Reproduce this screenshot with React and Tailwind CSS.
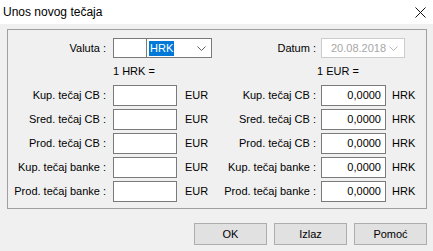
import React from "react";

const leftRows = ["Kup. tečaj CB :", "Sred. tečaj CB :", "Prod. tečaj CB :", "Kup. tečaj banke :", "Prod. tečaj banke :"];

const Chevron = ({ color = "#606060" }) => (
    <svg width="9" height="5" viewBox="0 0 9 5" className="block">
        <path d="M0.5 0.5 L4.5 4.5 L8.5 0.5" fill="none" stroke={color} strokeWidth="1" />
    </svg>
);

const RateRow = ({ label, value, unit, labelW, inputW, gap, unitGap }) => (
    <div className="flex items-center h-[21px]">
        <div className="text-right shrink-0" style={{ width: labelW }}>{label}</div>
        <div
            className="h-[21px] border border-[#7a7a7a] bg-white flex items-center justify-end pr-[4px] shrink-0"
            style={{ width: inputW, marginLeft: gap }}
        >
            {value}
        </div>
        <div style={{ marginLeft: unitGap }}>{unit}</div>
    </div>
);

export default function App() {
    return (
        <div
            className="w-[433px] h-[251px] bg-[#f0f0f0] text-[11px] text-black overflow-hidden flex flex-col"
            style={{ fontFamily: '"Liberation Sans", Arial, sans-serif' }}
        >
            {/* Title bar */}
            <div className="h-[24px] bg-white flex items-center justify-between pl-[3px] pr-[7px] shrink-0">
                <span className="text-[12px] leading-none">Unos novog tečaja</span>
                <svg width="11" height="11" viewBox="0 0 11 11">
                    <path d="M0.5 0.5 L10.5 10.5 M10.5 0.5 L0.5 10.5" stroke="#111" strokeWidth="1" />
                </svg>
            </div>

            {/* Frame */}
            <div className="ml-[7px] mt-[5px] w-[420px] h-[180px] border border-[#a0a0a0] flex">
                {/* Left half */}
                <div className="w-[207px] flex flex-col pt-[8px]">
                    <div className="flex items-center h-[20px]">
                        <div className="w-[98px] text-right">Valuta :</div>
                        <div className="ml-[7px] w-[99px] h-[20px] border border-[#7a7a7a] bg-white flex">
                            <div className="w-[33px] border-r border-[#7a7a7a]"></div>
                            <div className="flex-1 flex items-center justify-between pl-[2px] pr-[5px]">
                                <span className="bg-[#0078d7] text-white h-[15px] px-[1px] flex items-center">HRK</span>
                                <Chevron />
                            </div>
                        </div>
                    </div>
                    <div className="h-[14px] mt-[6px] mb-[7px] pl-[105px] flex items-center">1 HRK =</div>
                    <div className="flex flex-col gap-[3px]">
                        {leftRows.map((l) => (
                            <RateRow key={l} label={l} value="" unit="EUR" labelW={98} inputW={64} gap={7} unitGap={8} />
                        ))}
                    </div>
                </div>

                {/* Right half */}
                <div className="flex-1 flex flex-col pt-[8px]">
                    <div className="flex items-center h-[20px]">
                        <div className="w-[101px] text-right">Datum :</div>
                        <div className="ml-[5px] w-[84px] h-[20px] border border-[#cccccc] bg-white flex items-center justify-between pl-[9px] pr-[6px] text-[#a6a6a6]">
                            <span>20.08.2018</span>
                            <Chevron color="#b4b4b4" />
                        </div>
                    </div>
                    <div className="h-[14px] mt-[6px] mb-[7px] pl-[102px] flex items-center">1 EUR =</div>
                    <div className="flex flex-col gap-[3px]">
                        {leftRows.map((l) => (
                            <RateRow key={l} label={l} value="0,0000" unit="HRK" labelW={101} inputW={65} gap={5} unitGap={6} />
                        ))}
                    </div>
                </div>
            </div>

            {/* Buttons */}
            <div className="flex justify-end gap-[7px] pr-[6px] mt-[14px]">
                {["OK", "Izlaz", "Pomoć"].map((b) => (
                    <button
                        key={b}
                        className="w-[73px] h-[22px] bg-[#e1e1e1] border border-[#adadad] flex items-center justify-center"
                    >
                        {b}
                    </button>
                ))}
            </div>
        </div>
    );
}
